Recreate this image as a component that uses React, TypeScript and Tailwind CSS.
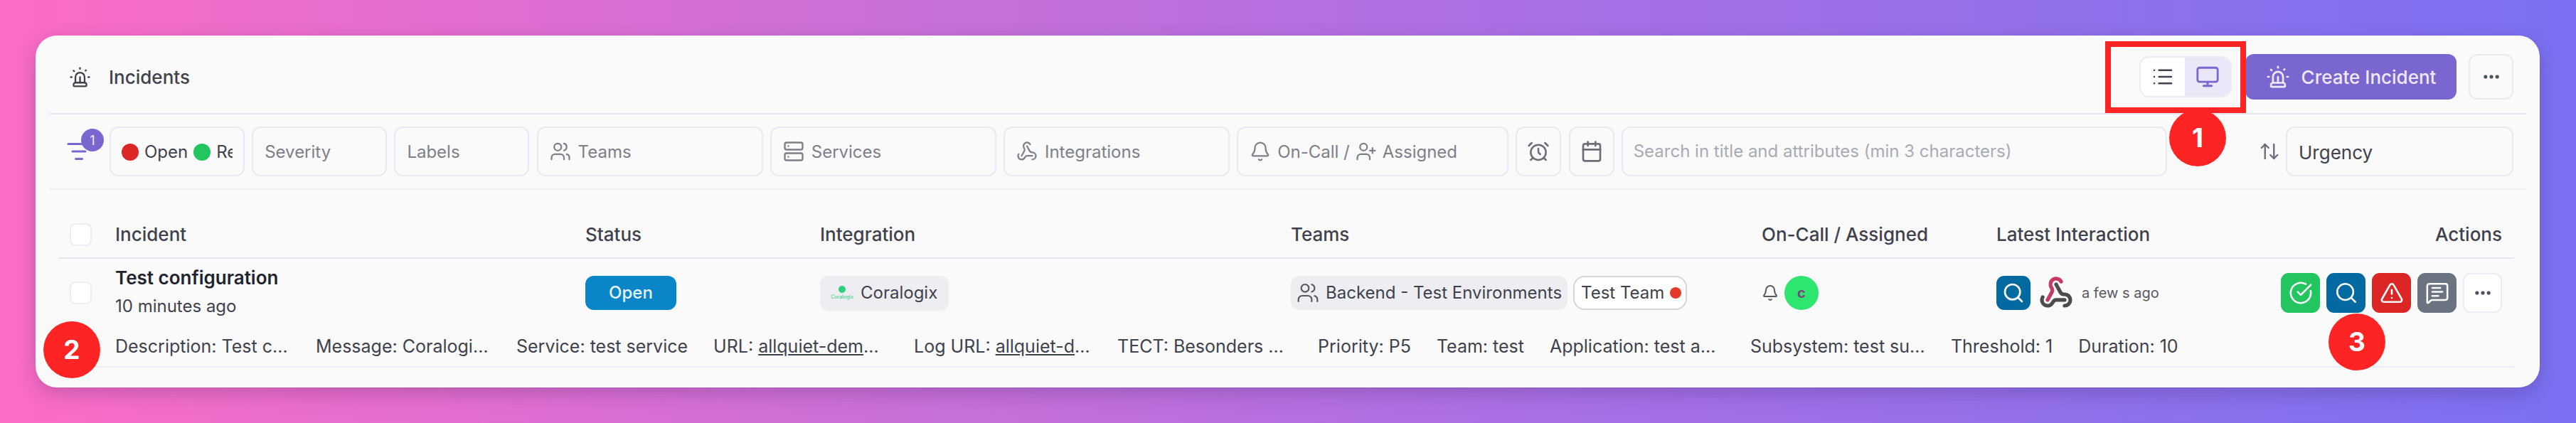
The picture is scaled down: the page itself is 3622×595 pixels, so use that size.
import React from "react";
import {
  AlarmClock,
  ArrowUpDown,
  Bell,
  Calendar,
  CircleCheckBig,
  Ellipsis,
  List,
  ListFilter,
  MessageSquareText,
  Monitor,
  Search,
  Server,
  Siren,
  TriangleAlert,
  UserPlus,
  Users,
  Webhook,
} from "lucide-react";

const columns =
  "grid grid-cols-[64px_661px_330px_662px_662px_330px_400px_311px] items-center pl-4";

const FilterBox = ({
  width,
  icon,
  label,
}: {
  width: string;
  icon?: React.ReactNode;
  label?: string;
}) => (
  <div
    className={`${width} flex h-[70px] shrink-0 items-center gap-[10px] rounded-[12px] border-2 border-[#e9e9ef] bg-[#fafafb] px-[16px] text-[24px] text-[#7d7f89]`}
  >
    {icon}
    {label && <span className="mt-[2px]">{label}</span>}
  </div>
);

const ActionButton = ({
  color,
  children,
}: {
  color: string;
  children: React.ReactNode;
}) => (
  <div
    className={`${color} flex h-[56px] w-[55px] items-center justify-center rounded-[11px] text-white`}
  >
    {children}
  </div>
);

const Attribute = ({
  name,
  value,
  link,
  maxWidth = "max-w-[246px]",
}: {
  name: string;
  value: string;
  link?: boolean;
  maxWidth?: string;
}) => (
  <div className={`${maxWidth} shrink-0 truncate`}>
    {name}: <span className={link ? "underline" : ""}>{value}</span>
  </div>
);

const Marker = ({ position, number }: { position: string; number: string }) => (
  <div
    className={`${position} absolute flex h-[80px] w-[80px] items-center justify-center rounded-full bg-[#ff2424] text-[37px] font-bold text-white`}
  >
    {number}
  </div>
);

const App = () => {
  return (
    <div
      className="relative h-[595px] w-full overflow-hidden bg-[linear-gradient(90deg,#fb6cc5_0%,#c96fd8_35%,#a36fe6_65%,#7a70f1_100%)] py-[50px] pl-[50px] pr-[51px] text-[#374151]"
      style={{ fontFamily: "Inter, sans-serif" }}
    >
      <div className="flex h-[495px] flex-col rounded-[30px] bg-[#fafafb] pl-[20px] pr-[19px] shadow-[0_8px_24px_rgba(60,30,90,0.25)]">
        {/* Title row */}
        <div className="flex h-[111px] shrink-0 items-center border-b-2 border-[#e6e6ee] pl-[27px] pr-[18px] pt-[7px]">
          <Siren size={31} strokeWidth={1.8} className="text-[#3f424c]" />
          <span className="ml-[25px] text-[26px] font-medium text-[#3f424c]">
            Incidents
          </span>
          <div className="ml-auto flex h-[58px] w-[130px] overflow-hidden rounded-[14px] border-2 border-[#ececf2]">
            <div className="flex w-[62px] items-center justify-center bg-white">
              <List size={32} strokeWidth={1.9} className="text-[#3f424c]" />
            </div>
            <div className="flex flex-1 items-center justify-center bg-[#e9e7f8]">
              <Monitor size={34} strokeWidth={2} className="text-[#7a66cf]" />
            </div>
          </div>
          <div className="ml-[19px] flex h-[64px] w-[297px] items-center justify-center gap-[16px] rounded-[12px] bg-[#7a66cf] text-[26px] font-medium text-[#eeeafb]">
            <Siren size={34} strokeWidth={1.9} />
            <span>Create Incident</span>
          </div>
          <div className="ml-[17px] flex h-[64px] w-[63px] items-center justify-center rounded-[12px] border-2 border-[#e9e9ef]">
            <Ellipsis size={28} strokeWidth={2.4} className="text-[#4b4e58]" />
          </div>
        </div>

        {/* Filters row */}
        <div className="flex h-[106px] shrink-0 items-center border-b-2 border-[#ececf2] pl-[28px] pr-[18px]">
          <div className="relative flex h-[70px] w-[56px] shrink-0 items-center">
            <ListFilter size={36} strokeWidth={2} className="-ml-[5px] text-[#7a66cf]" />
            <div className="absolute left-[16px] top-[3px] flex h-[32px] w-[32px] items-center justify-center rounded-full bg-[#7a66cf] text-[18px] text-[#eeeafb]">
              1
            </div>
          </div>
          <div className="flex flex-1 items-center gap-[10.2px]">
            <div className="flex h-[70px] w-[190px] shrink-0 items-center rounded-[12px] border-2 border-[#e9e9ef] pl-[15px] pr-[15px] text-[24px] text-[#3f424c]">
              <div className="mt-[2px] flex items-center gap-[8px] overflow-hidden whitespace-nowrap">
                <span className="h-[24px] w-[24px] shrink-0 rounded-full bg-[#dc2626]" />
                <span>Open</span>
                <span className="h-[24px] w-[24px] shrink-0 rounded-full bg-[#22c55e]" />
                <span>Resolved</span>
              </div>
            </div>
            <FilterBox width="w-[190px]" label="Severity" />
            <FilterBox width="w-[190px]" label="Labels" />
            <FilterBox
              width="w-[318px]"
              icon={<Users size={30} strokeWidth={1.8} />}
              label="Teams"
            />
            <FilterBox
              width="w-[318px]"
              icon={<Server size={30} strokeWidth={1.9} />}
              label="Services"
            />
            <FilterBox
              width="w-[318px]"
              icon={<Webhook size={30} strokeWidth={1.8} />}
              label="Integrations"
            />
            <div className="flex h-[70px] w-[382px] shrink-0 items-center rounded-[12px] border-2 border-[#e9e9ef] pl-[16px] text-[24px] text-[#7d7f89]">
              <Bell size={30} strokeWidth={1.8} />
              <span className="ml-[9px] mt-[2px]">On-Call /</span>
              <UserPlus size={30} strokeWidth={1.8} className="ml-[8px]" />
              <span className="ml-[8px] mt-[2px]">Assigned</span>
            </div>
            <div className="flex h-[70px] w-[64px] shrink-0 items-center justify-center rounded-[12px] border-2 border-[#e9e9ef] text-[#6b6d77]">
              <AlarmClock size={32} strokeWidth={1.9} />
            </div>
            <div className="flex h-[70px] w-[64px] shrink-0 items-center justify-center rounded-[12px] border-2 border-[#e9e9ef] text-[#6b6d77]">
              <Calendar size={32} strokeWidth={2} />
            </div>
            <div className="flex h-[70px] w-[767px] shrink-0 items-center rounded-[12px] border-2 border-[#e9e9ef] px-[15px] text-[24px] text-[#a9abb4]">
              Search in title and attributes (min 3 characters)
            </div>
            <div className="ml-auto flex items-center gap-[8px]">
              <ArrowUpDown size={30} strokeWidth={1.9} className="text-[#6b6d77]" />
              <div className="flex h-[70px] w-[320px] items-center rounded-[12px] border-2 border-[#e9e9ef] px-[16px] text-[26px] text-[#3f424c]">
                <span className="mt-[2px]">Urgency</span>
              </div>
            </div>
          </div>
        </div>

        {/* Table */}
        <div className="ml-[12px] mr-[17px] mt-[30px]">
          <div
            className={`${columns} h-[67px] border-b-2 border-[#e6e6ee] text-[26px] font-medium text-[#3f424c]`}
          >
            <div className="h-[32px] w-[31px] rounded-[8px] border-2 border-[#ececf2] bg-white" />
            <div>Incident</div>
            <div>Status</div>
            <div>Integration</div>
            <div>Teams</div>
            <div>On-Call / Assigned</div>
            <div>Latest Interaction</div>
            <div className="text-right">Actions</div>
          </div>

          <div className={`${columns} h-[96px] text-[#3f424c]`}>
            <div className="h-[32px] w-[31px] rounded-[8px] border-2 border-[#ececf2] bg-white" />
            <div className="mb-[2px] flex flex-col gap-[14px]">
              <div className="text-[26px] leading-[26px] font-semibold text-[#1f2430]">
                Test configuration
              </div>
              <div className="text-[24px] leading-[26px]">10 minutes ago</div>
            </div>
            <div>
              <div className="flex h-[48px] w-[128px] items-center justify-center rounded-[12px] bg-[#0a85c7] text-[24px] font-medium text-[#e8f4fb]">
                Open
              </div>
            </div>
            <div>
              <div className="flex h-[49px] w-[181px] items-center gap-[9px] rounded-[12px] bg-[#eeeef2] pl-[14px] text-[24px]">
                <div className="flex w-[34px] flex-col items-center gap-[2px]">
                  <span className="h-[10px] w-[10px] rounded-full bg-[#2cd07f]" />
                  <span className="text-[7px] leading-[8px] text-[#2cd07f]">
                    Coralogix
                  </span>
                </div>
                <span>Coralogix</span>
              </div>
            </div>
            <div className="flex items-center gap-[8px]">
              <div className="flex h-[48px] shrink-0 items-center gap-[9px] whitespace-nowrap rounded-[12px] bg-[#eeeef2] pl-[8px] pr-[8px] text-[24px]">
                <Users size={32} strokeWidth={1.6} className="text-[#55585f]" />
                <span>Backend - Test Environments</span>
              </div>
              <div className="flex h-[48px] shrink-0 items-center gap-[8px] whitespace-nowrap rounded-[16px] border-2 border-[#d5d5e2] bg-white pl-[9px] pr-[6px] text-[24px]">
                <span>Test Team</span>
                <span className="h-[16px] w-[16px] rounded-full bg-[#e5392d]" />
              </div>
            </div>
            <div className="flex items-center gap-[8px]">
              <Bell size={24} strokeWidth={2} className="text-[#55585f]" />
              <div className="flex h-[48px] w-[48px] items-center justify-center rounded-full bg-[#2ee56f] text-[20px] font-bold text-[#7a4a7c]">
                c
              </div>
            </div>
            <div className="flex items-center gap-[12px]">
              <div className="flex h-[48px] w-[48px] items-center justify-center rounded-[11px] bg-[#0369a1] text-white">
                <Search size={32} strokeWidth={2} />
              </div>
              <svg
                width="48"
                height="48"
                viewBox="0 0 24 24"
                fill="none"
                strokeWidth="2.6"
                strokeLinecap="round"
                strokeLinejoin="round"
              >
                <path
                  stroke="#4b4b50"
                  d="M18 16.98h-5.99c-1.1 0-1.95.94-2.48 1.9A4 4 0 0 1 2 17c.01-.7.2-1.4.57-2"
                />
                <path
                  stroke="#c73a63"
                  d="m6 17 3.13-5.78c.53-.97.1-2.18-.5-3.1a4 4 0 1 1 6.89-4.06"
                />
                <path
                  stroke="#4b4b50"
                  d="m12 6 3.13 5.73C15.66 12.7 16.9 13 18 13a4 4 0 0 1 0 8"
                />
              </svg>
              <span className="text-[20px] text-[#55585f]">a few s ago</span>
            </div>
            <div className="flex items-center justify-end gap-[9px]">
              <ActionButton color="bg-[#22c55e]">
                <CircleCheckBig size={34} strokeWidth={1.8} />
              </ActionButton>
              <ActionButton color="bg-[#0369a1]">
                <Search size={34} strokeWidth={1.8} />
              </ActionButton>
              <ActionButton color="bg-[#dc2626]">
                <TriangleAlert size={34} strokeWidth={1.8} />
              </ActionButton>
              <ActionButton color="bg-[#6b7280]">
                <MessageSquareText size={34} strokeWidth={1.8} />
              </ActionButton>
              <div className="flex h-[56px] w-[55px] items-center justify-center rounded-[11px] border-2 border-[#ececf2] bg-white">
                <Ellipsis size={28} strokeWidth={2.4} className="text-[#4b4e58]" />
              </div>
            </div>
          </div>

          <div className="flex h-[57px] items-center gap-[36px] whitespace-nowrap border-b-2 border-[#ececf2] pl-[80px] text-[25px] text-[#3f424c]">
            <Attribute name="Description" value="Test configuration" />
            <Attribute name="Message" value="Coralogix test alert" />
            <Attribute name="Service" value="test service" />
            <Attribute name="URL" value="allquiet-demo.com/alerts" link />
            <Attribute
              name="Log URL"
              value="allquiet-demo.com/logs"
              link
              maxWidth="max-w-[250px]"
            />
            <Attribute name="TECT" value="Besonders wichtig" />
            <Attribute name="Priority" value="P5" />
            <Attribute name="Team" value="test" />
            <Attribute name="Application" value="test application" />
            <Attribute name="Subsystem" value="test subsystem" />
            <Attribute name="Threshold" value="1" />
            <Attribute name="Duration" value="10" />
          </div>
        </div>
      </div>

      {/* Tutorial annotations laid over the screenshot */}
      <div className="absolute left-[2960px] top-[58px] h-[101px] w-[198px] border-[8px] border-[#ff2424]" />
      <Marker position="left-[3050px] top-[154px]" number="1" />
      <Marker position="left-[61px] top-[452px]" number="2" />
      <Marker position="left-[3274px] top-[441px]" number="3" />
    </div>
  );
};

export default App;
